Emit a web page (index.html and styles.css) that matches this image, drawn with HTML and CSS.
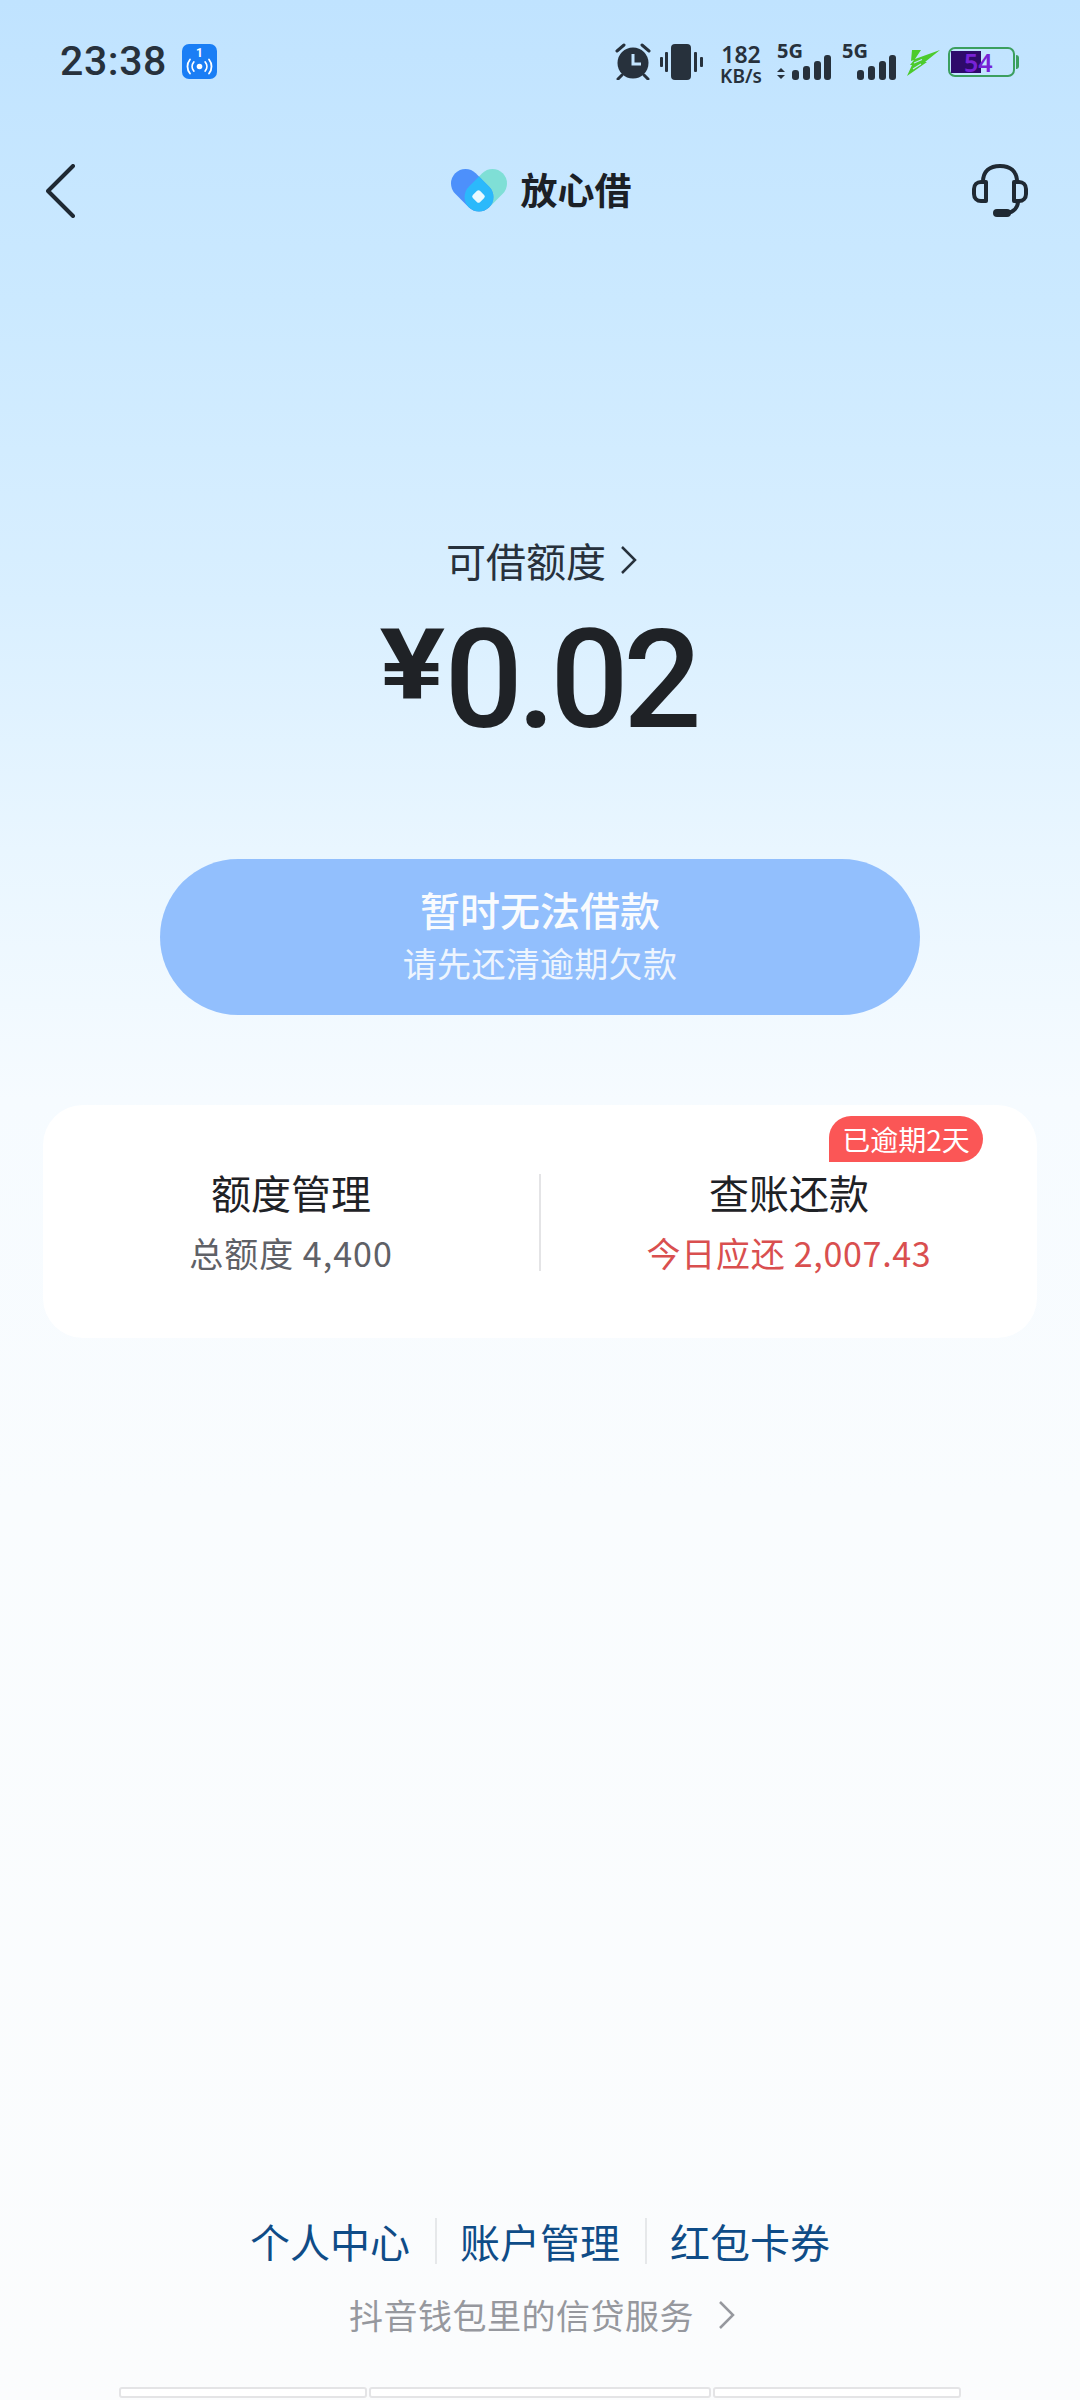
FILE: index.html
```html
<!DOCTYPE html>
<html lang="zh-CN">
<head>
    <meta charset="UTF-8">
    <meta name="viewport" content="width=device-width, initial-scale=1.0">
    <title>放心借</title>
    <link rel="stylesheet" href="styles.css">
</head>
<body>
<div class="page">

    <!-- Status bar -->
    <div class="status">
        <div class="status-left">
            <span class="clock">23:38</span>
            <svg class="hotspot" width="35" height="35" viewBox="0 0 35 35">
                <rect width="35" height="35" rx="7" fill="#1a7ef5"/>
                <text x="17.5" y="13" text-anchor="middle" class="hotspot-num">1</text>
                <circle cx="17.5" cy="22.5" r="2.8" fill="#fff"/>
                <g fill="none" stroke="#fff" stroke-width="1.8" stroke-linecap="round">
                    <path d="M11.8 18a7 7 0 0 0 0 9"/>
                    <path d="M23.2 18a7 7 0 0 1 0 9"/>
                    <path d="M8 15.500a11 11 0 0 0 0 14"/>
                    <path d="M27 15.500a11 11 0 0 1 0 14"/>
                </g>
            </svg>
        </div>
        <div class="status-right">
            <svg class="alarm" width="36" height="37" viewBox="0 0 36 37">
                <circle cx="18" cy="20" r="15.500" fill="#27313c"/>
                <path d="M18 11v10h8" fill="none" stroke="#c3e5ff" stroke-width="3"/>
                <path d="M2 8l7-6M34 8l-7-6M7 32l-4 4M29 32l4 4" fill="none" stroke="#27313c" stroke-width="3" stroke-linecap="round"/>
            </svg>
            <svg class="vibrate" width="43" height="36" viewBox="0 0 43 36">
                <rect x="11" y="0" width="20" height="36" rx="4" fill="#27313c"/>
                <g fill="#27313c">
                    <rect x="0" y="13" width="3" height="10" rx="1"/>
                    <rect x="5" y="8" width="3" height="20" rx="1"/>
                    <rect x="34" y="8" width="3" height="20" rx="1"/>
                    <rect x="40" y="13" width="3" height="10" rx="1"/>
                </g>
            </svg>
            <div class="speed"><span>182</span><span>KB/s</span></div>
            <div class="signal signal-first">
                <span class="five-g">5G</span>
                <svg width="54" height="25" viewBox="0 0 54 25">
                    <path d="M0 17l4-4 4 4zM0 20h8l-4 4z" fill="#27313c"/>
                    <g fill="#27313c">
                        <rect x="15" y="15" width="7" height="10" rx="3"/>
                        <rect x="26" y="11" width="7" height="14" rx="3"/>
                        <rect x="37" y="6" width="7" height="19" rx="3"/>
                        <rect x="47" y="0" width="7" height="25" rx="3"/>
                    </g>
                </svg>
            </div>
            <div class="signal signal-second">
                <span class="five-g">5G</span>
                <svg width="54" height="25" viewBox="0 0 54 25">
                    <g fill="#27313c">
                        <rect x="15" y="15" width="7" height="10" rx="3"/>
                        <rect x="26" y="11" width="7" height="14" rx="3"/>
                        <rect x="37" y="6" width="7" height="19" rx="3"/>
                        <rect x="47" y="0" width="7" height="25" rx="3"/>
                    </g>
                </svg>
            </div>
            <svg class="bolt" width="33" height="27" viewBox="0 0 33 27">
                <path d="M5 0h9L8 9 33 0 18 12h2L0 26l5-11H3l4-5-3 1z" fill="#4ccb2c"/>
                <path d="M7 13L15 9.500M6 19l8-5" fill="none" stroke="#c1e4ff" stroke-width="1.200"/>
            </svg>
            <div class="battery">
                <div class="battery-body">
                    <div class="battery-fill"></div>
                    <span class="battery-num">54</span>
                </div>
                <div class="battery-tip"></div>
            </div>
        </div>
    </div>

    <!-- Nav bar -->
    <div class="nav">
        <svg class="nav-back" width="30" height="54" viewBox="0 0 30 54">
            <path d="M27 2L2 27l25 25" fill="none" stroke="#1f2933" stroke-width="4" stroke-linecap="round" stroke-linejoin="round"/>
        </svg>
        <div class="brand">
            <svg width="56" height="44" viewBox="0 0 56 44">
                <defs>
                    <clipPath id="bluePill">
                        <rect x="-14.500" y="-14.500" width="48" height="29" rx="14.500" transform="translate(14.500 14.500) rotate(45)"/>
                    </clipPath>
                </defs>
                <rect x="-14.500" y="-14.500" width="48" height="29" rx="14.500" transform="translate(41.500 14.500) rotate(135)" fill="#7fdfd6"/>
                <rect x="-14.500" y="-14.500" width="48" height="29" rx="14.500" transform="translate(14.500 14.500) rotate(45)" fill="#4d90fb"/>
                <g clip-path="url(#bluePill)">
                    <rect x="-14.500" y="-14.500" width="48" height="29" rx="14.500" transform="translate(41.500 14.500) rotate(135)" fill="#2bb9fb"/>
                </g>
                <rect x="-5" y="-5" width="10" height="10" rx="2" transform="translate(27.500 27.500) rotate(45)" fill="#e9f9ff"/>
            </svg>
            <span class="brand-name">放心借</span>
        </div>
        <svg class="nav-service" width="56" height="54" viewBox="0 0 56 54">
            <g fill="none" stroke="#1f2933" stroke-width="4" stroke-linecap="round" stroke-linejoin="round">
                <path d="M11 18C11 7 18 2 28 2s17 5 17 16"/>
                <path d="M14 18H9c-4 0-7 3-7 7v5c0 4 3 7 7 7h5z"/>
                <path d="M42 18h5c4 0 7 3 7 7v5c0 4-3 7-7 7h-5z"/>
                <path d="M46 37c0 6-4 11-11 12"/>
            </g>
            <path d="M25 49h10" stroke="#1f2933" stroke-width="8" stroke-linecap="round"/>
        </svg>
    </div>

    <!-- Available limit -->
    <div class="limit">
        <div class="limit-label">
            <span>可借额度</span>
            <svg width="17" height="30" viewBox="0 0 17 30">
                <path d="M2 2l13 13L2 28" fill="none" stroke="#27313c" stroke-width="2.500"/>
            </svg>
        </div>
        <div class="limit-amount"><span class="yen">¥</span><span class="num">0.02</span></div>
    </div>

    <!-- Disabled borrow button -->
    <div class="borrow">
        <div class="borrow-title">暂时无法借款</div>
        <div class="borrow-sub">请先还清逾期欠款</div>
    </div>

    <!-- Quota / repayment card -->
    <div class="card">
        <span class="overdue">已逾期2天</span>
        <div class="card-col">
            <div class="card-title">额度管理</div>
            <div class="card-sub">总额度 4,400</div>
        </div>
        <div class="card-line"></div>
        <div class="card-col">
            <div class="card-title">查账还款</div>
            <div class="card-sub card-sub-red">今日应还 2,007.43</div>
        </div>
    </div>

    <!-- Footer links -->
    <div class="footer">
        <div class="links">
            <span>个人中心</span>
            <span>账户管理</span>
            <span>红包卡券</span>
        </div>
        <div class="wallet">
            <span>抖音钱包里的信贷服务</span>
            <svg width="17" height="28" viewBox="0 0 17 28">
                <path d="M2 1l13 13L2 27" fill="none" stroke="#96989e" stroke-width="2.500"/>
            </svg>
        </div>
        <div class="tabs">
            <div class="tab tab-a"></div>
            <div class="tab tab-b"></div>
            <div class="tab tab-c"></div>
        </div>
    </div>

</div>
</body>
</html>
```

FILE: styles.css
```css
* {
    box-sizing: border-box;
}
body {
    margin: 0;
    font-family: "Noto Sans CJK SC", "Noto Sans", sans-serif;
    color: #1f2329;
}
.page {
    width: 1080px;
    height: 2400px;
    display: flex;
    flex-direction: column;
    overflow: hidden;
    background: linear-gradient(180deg, #c0e3ff 0, #cbe9ff 300px, #d9efff 600px, #e9f6ff 850px, #f6fbff 1100px, #f9fcfe 1500px, #fbfcfd 2400px);
}

/* status bar */
.status {
    height: 164px;
    padding: 43px 61px 0 60px;
    display: flex;
    justify-content: space-between;
    align-items: flex-start;
    color: #27313c;
}
.status-left {
    display: flex;
    align-items: center;
    gap: 15px;
}
.clock {
    font-family: Roboto, sans-serif;
    font-weight: 500;
    font-size: 41px;
    line-height: 37px;
    letter-spacing: 0.6px;
}
.hotspot-num {
    font-family: Roboto, sans-serif;
    font-size: 12px;
    font-weight: 700;
    fill: #fff;
}
.status-right {
    display: flex;
    align-items: flex-start;
}
.vibrate {
    margin: 1px 0 0 9px;
}
.speed {
    margin-left: 16px;
    display: flex;
    flex-direction: column;
    align-items: center;
    width: 44px;
    font-family: "Noto Sans", sans-serif;
    font-weight: 600;
}
.speed span:first-child {
    font-size: 23px;
    line-height: 22px;
}
.speed span:last-child {
    font-size: 19px;
    line-height: 20px;
    margin-top: 1px;
}
.signal {
    position: relative;
    width: 54px;
    height: 37px;
    display: flex;
    align-items: flex-end;
}
.signal-first {
    margin-left: 14px;
}
.signal-second {
    margin-left: 11px;
}
.five-g {
    position: absolute;
    left: 0;
    top: 0;
    font-family: "Noto Sans", sans-serif;
    font-size: 20px;
    line-height: 16px;
    font-weight: 700;
}
.bolt {
    margin: 7px 0 0 11px;
}
.battery {
    margin: 4px 0 0 8px;
    display: flex;
    align-items: center;
    gap: 1px;
}
.battery-body {
    position: relative;
    width: 67px;
    height: 30px;
    border: 2px solid #3c9f5f;
    border-radius: 7px;
}
.battery-fill {
    position: absolute;
    left: 1px;
    top: 2px;
    bottom: 2px;
    width: 30px;
    background: #2e0a6b;
}
.battery-num {
    position: absolute;
    left: 14px;
    top: -2px;
    font-family: "Noto Sans", sans-serif;
    font-size: 25px;
    line-height: 30px;
    font-weight: 600;
    color: #7722d6;
}
.battery-tip {
    width: 3px;
    height: 14px;
    background: #3c9f5f;
    border-radius: 0 3px 3px 0;
}

/* nav */
.nav {
    height: 54px;
    padding: 0 52px 0 46px;
    display: grid;
    grid-template-columns: 1fr auto 1fr;
    align-items: center;
}
.nav-service {
    justify-self: end;
}
.brand {
    margin-left: 8px;
    margin-top: -5px;
    display: flex;
    align-items: center;
    gap: 14px;
}
.brand svg {
    margin-top: 5px;
}
.brand-name {
    font-size: 37px;
    line-height: 44px;
    font-weight: 600;
    color: #1b2026;
}

/* limit */
.limit {
    margin-top: 318px;
    display: flex;
    flex-direction: column;
    align-items: center;
}
.limit-label {
    margin-left: 3px;
    display: flex;
    align-items: center;
    gap: 14px;
    font-size: 40px;
    line-height: 48px;
    color: #27313c;
}
.limit-amount {
    margin-top: 27px;
    margin-left: 2px;
    display: flex;
    align-items: flex-start;
    font-family: Roboto, sans-serif;
    font-weight: 500;
    color: #1f2226;
}
.yen {
    font-size: 98px;
    line-height: 109px;
    font-weight: 700;
    margin-right: 6px;
    transform: scaleX(1.25);
}
.num {
    font-size: 138px;
    line-height: 138px;
    letter-spacing: -5.5px;
}

/* button */
.borrow {
    margin: 110px auto 0;
    padding-bottom: 6px;
    width: 760px;
    height: 156px;
    border-radius: 78px;
    background: #92bffd;
    color: #fff;
    display: flex;
    flex-direction: column;
    align-items: center;
    justify-content: center;
}
.borrow-title {
    font-size: 40px;
    line-height: 52px;
    font-weight: 500;
    opacity: 0.95;
}
.borrow-sub {
    margin-top: 6px;
    font-size: 34px;
    line-height: 44px;
    letter-spacing: 0.3px;
    opacity: 0.85;
}

/* card */
.card {
    position: relative;
    margin: 90px 43px 0;
    height: 233px;
    border-radius: 40px;
    background: #fff;
    display: grid;
    grid-template-columns: 1fr 2px 1fr;
    padding-top: 69px;
}
.overdue {
    position: absolute;
    right: 54px;
    top: 11px;
    width: 154px;
    height: 46px;
    border-radius: 22px 23px 23px 0;
    background: #fb5656;
    color: #fff;
    font-size: 28px;
    line-height: 46px;
    text-align: center;
}
.card-col {
    text-align: center;
    margin-top: -6px;
}
.card-title {
    font-size: 40px;
    line-height: 48px;
    color: #1f2226;
}
.card-sub {
    margin-top: 15px;
    font-size: 34px;
    line-height: 44px;
    letter-spacing: 1px;
    color: #5f6167;
}
.card-sub-red {
    letter-spacing: 0.7px;
    color: #d94f4f;
}
.card-line {
    height: 97px;
    background: #e4e4e6;
}

/* footer */
.footer {
    margin-top: auto;
    display: flex;
    flex-direction: column;
    align-items: center;
}
.links {
    display: flex;
    font-size: 40px;
    line-height: 46px;
    color: #0f4c87;
}
.links span {
    padding: 0 25px;
}
.links span + span {
    padding-left: 23px;
    border-left: 2px solid #e6e8ea;
}
.wallet {
    margin-top: 29px;
    margin-left: 4px;
    display: flex;
    align-items: center;
    gap: 24px;
    font-size: 34px;
    line-height: 44px;
    letter-spacing: 0.5px;
    color: #96989e;
}
.tabs {
    margin-top: 50px;
    display: flex;
    gap: 2px;
    margin-bottom: 2px;
}
.tab {
    height: 11px;
    background: #fff;
    border: 2px solid #e4e4e6;
    border-radius: 3px;
}
.tab-a {
    width: 248px;
}
.tab-b {
    width: 342px;
}
.tab-c {
    width: 248px;
}
```
